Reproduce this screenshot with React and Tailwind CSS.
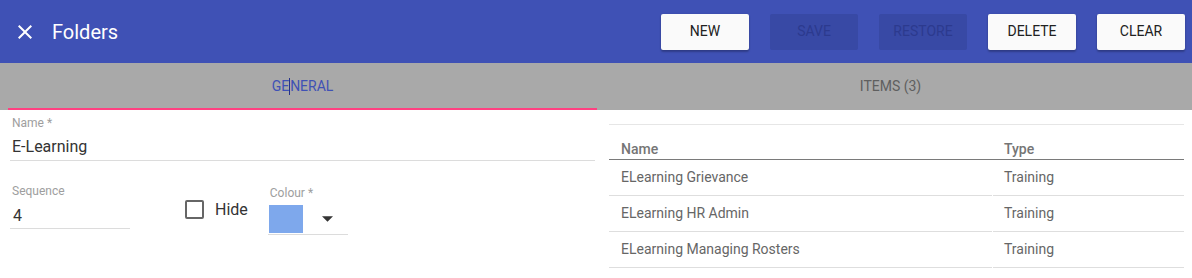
import React from "react";

function Btn({ children, disabled }) {
  return (
    <div
      className={
        disabled
          ? "w-[88px] h-[36px] rounded-[2px] bg-[#3849a5] text-[#2c3a8e] text-[14px] flex items-center justify-center"
          : "w-[88px] h-[36px] rounded-[2px] bg-[#fafafa] text-[#212121] text-[14px] flex items-center justify-center shadow-[0_2px_2px_rgba(0,0,0,0.24),0_0_2px_rgba(0,0,0,0.12)]"
      }
    >
      {children}
    </div>
  );
}

const rows = ["ELearning Grievance", "ELearning HR Admin", "ELearning Managing Rosters"];

export default function App() {
  return (
    <div className="w-[1192px] h-[278px] bg-white overflow-hidden" style={{ fontFamily: "Roboto, 'Noto Sans', sans-serif" }}>
      {/* Header */}
      <div className="h-[63px] bg-[#3f51b5] flex items-center">
        <svg className="ml-[13px] w-[24px] h-[24px]" viewBox="0 0 24 24" fill="#ffffff">
          <path d="M19 6.41L17.59 5 12 10.59 6.41 5 5 6.41 10.59 12 5 17.59 6.41 19 12 13.41 17.59 19 19 17.59 13.41 12z" />
        </svg>
        <div className="ml-[15px] text-[20px] text-white leading-none">Folders</div>
        <div className="ml-auto mr-[7px] flex gap-[21px]">
          <Btn>NEW</Btn>
          <Btn disabled>SAVE</Btn>
          <Btn disabled>RESTORE</Btn>
          <Btn>DELETE</Btn>
          <Btn>CLEAR</Btn>
        </div>
      </div>

      {/* Tabs */}
      <div className="h-[47px] bg-[#a9a9a9] px-[8px] flex">
        <div className="w-[589px] flex items-center justify-center border-b-2 border-[#ff4081] text-[14px] text-[#3f51b5] pt-[2px]">
          <span>GE</span>
          <span className="inline-block w-px h-[17px] bg-[#26318a]"></span>
          <span>NERAL</span>
        </div>
        <div className="flex-1 flex items-center justify-center text-[14px] text-[#5f5f5f]">ITEMS (3)</div>
      </div>

      {/* Body */}
      <div className="flex pl-[10px] pr-[8px]">
        {/* Left */}
        <div className="w-[585px] pt-[6px]">
          <div className="text-[12px] leading-[14px] text-[#9e9e9e] pl-[2px]">Name *</div>
          <div className="mt-[5px] text-[16px] leading-[24px] text-[#333] pl-[2px] pb-[1px] border-b border-[#dcdcdc]">E-Learning</div>

          <div className="mt-[23px] flex items-start">
            <div className="w-[120px]">
              <div className="text-[12px] leading-[14px] text-[#9e9e9e] pl-[2px]">Sequence</div>
              <div className="mt-[6px] text-[16px] leading-[24px] text-[#333] pl-[3px] border-b border-[#dcdcdc]">4</div>
            </div>
            <div className="ml-[55px] mt-[16px] flex items-center">
              <div className="w-[19px] h-[19px] border-2 border-[#666] rounded-[2px]"></div>
              <div className="ml-[11px] text-[16px] leading-[19px] text-[#333]">Hide</div>
            </div>
            <div className="ml-[20px] mt-[2px] w-[80px]">
              <div className="text-[12px] leading-[14px] text-[#9e9e9e] pl-[2px]">Colour *</div>
              <div className="mt-[5px] flex items-center pb-[1px] border-b border-[#dcdcdc]">
                <div className="ml-[1px] w-[34px] h-[28px] bg-[#7ea8ec]"></div>
                <svg className="ml-[19px] w-[11px] h-[6px]" viewBox="0 0 10 5" fill="#333">
                  <path d="M0 0L5 5L10 0z" />
                </svg>
              </div>
            </div>
          </div>
        </div>

        {/* Right */}
        <div className="flex-1 ml-[14px] pt-[14px]">
          <div className="border-t border-[#e6e6e6]">
            <div className="grid grid-cols-[383px_1fr] h-[35px] items-end border-b border-[#7a7a7a] text-[14px] leading-[20px] font-medium text-[#757575]">
              <div className="pl-[12px]">Name</div>
              <div className="pl-[12px]">Type</div>
            </div>
            {rows.map((r) => (
              <div key={r} className="grid grid-cols-[383px_1fr] gap-x-px text-[14px] text-[#666]">
                <div className="h-[36px] flex items-center pl-[12px] border-b border-[#dedede]">{r}</div>
                <div className="h-[36px] flex items-center pl-[11px] border-b border-[#dedede]">Training</div>
              </div>
            ))}
          </div>
        </div>
      </div>
    </div>
  );
}
